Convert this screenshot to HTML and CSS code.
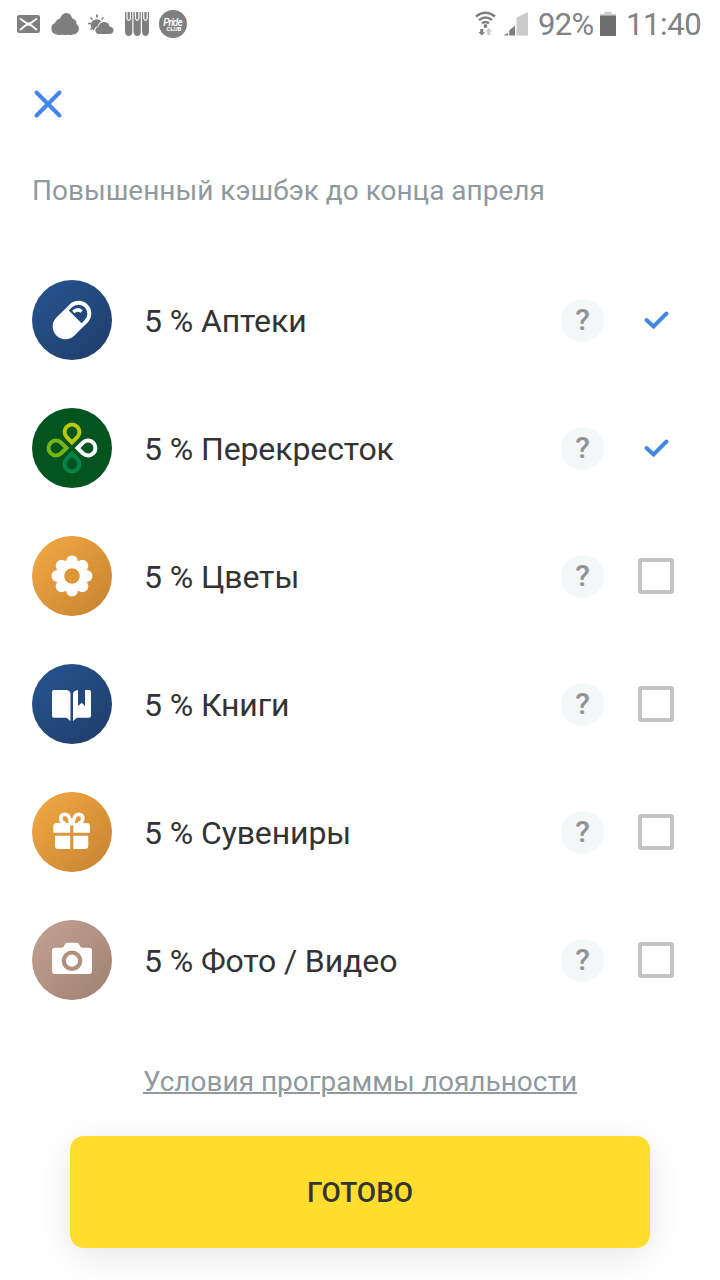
FILE: index.html
```html
<!DOCTYPE html>
<html lang="ru">
<head>
    <meta charset="UTF-8">
    <meta name="viewport" content="width=device-width, initial-scale=1.0">
    <title>Повышенный кэшбэк</title>
    <link rel="stylesheet" href="styles.css">
</head>
<body>

    <!-- status bar -->
    <div class="status-bar">
        <svg class="status-icons" width="200" height="48" viewBox="0 0 200 48">
            <rect x="17" y="15" width="23" height="18" rx="2"/>
            <path class="cut" d="M20 18.500L25.500 22.500Q28.500 24.500 31.500 22.500L37 18.500M20 30L25.500 25.500Q28.500 23.500 31.500 25.500L37 30"/>
            <path d="M57 34.500A6 6 0 0 1 55 23Q56 19.500 60 18.500Q62 13 66.500 13Q71 13.500 72 18Q77 20 76.500 24Q79 25.500 79 28.500Q78.500 34 73 34.500Q70 35.500 68 34.500Q65 35.500 62 34.500Q59 35.500 57 34.500Z"/>
            <path d="M94 30.500A6 6 0 1 1 101.500 21.500Q98.500 22.500 98 26Q94.500 27 94 30.500Z"/>
            <path class="rays" d="M88 23.500H91M90.500 17.500L92.500 19.500M97 14.500V17.500M103.500 17.500L101.500 19.500M90.500 29.500L92 28"/>
            <path d="M97.500 34A4 4 0 0 1 98.500 26.500Q100 21.500 105 22Q109 22.500 109.500 26.500Q113.500 27 113.500 30.500Q113 34 109.500 34Z"/>
            <path d="M125 12H132.300V32Q132 36 128.700 36Q125.500 36 125 32ZM133.500 12H140.800V32Q140.500 36 137.200 36Q134 36 133.500 32ZM142 12H149V32Q148.500 36 145.500 36Q142.500 36 142 32Z"/>
            <path class="cut thin" d="M127 12V18.500Q128.700 22.500 130.400 18.500V12M135.500 12V18.500Q137.200 22.500 138.900 18.500V12M143.800 12V18.500Q145.500 22.500 147.200 18.500V12"/>
            <circle cx="173" cy="24" r="14"/>
            <text class="script" x="172.500" y="25.500" text-anchor="middle">Pride</text>
            <text class="club" x="174" y="31" text-anchor="middle">CLUB</text>
        </svg>
        <div class="status-right">
            <svg width="56" height="48" viewBox="0 0 56 48">
                <path class="wifi" d="M1 16.500Q10.500 9 20 16.500M4 20Q10.500 15 17 20M7 23.300Q10.500 20.500 14 23.300"/>
                <circle cx="10.500" cy="26" r="1.900"/>
                <path d="M5.200 29H8.200V32H10L6.700 35.500L3.500 32H5.200Z"/>
                <path class="pale" d="M12.200 35V31.500H10.500L13.700 28L17 31.500H15.200V35Z"/>
                <path class="pale" d="M41.500 35.500V17.500L53 12V35.500Z"/>
                <path d="M29 35.500L33 32.500V35.500ZM34.200 35.500V30.500L40 25.500V35.500Z"/>
            </svg>
            <span class="battery-text">92%</span>
            <svg class="battery" width="16" height="24" viewBox="0 0 16 24">
                <path class="pale" d="M4.500 0H11.500V2H16V3.500H0V2H4.500Z"/>
                <rect y="3.500" width="16" height="20.500"/>
            </svg>
            <span class="clock">11:40</span>
        </div>
    </div>

    <div class="toolbar">
        <button class="close-button" aria-label="Закрыть">
            <svg width="32" height="32" viewBox="0 0 32 32">
                <path d="M4.500 4.500L27.500 27.500M27.500 4.500L4.500 27.500"/>
            </svg>
        </button>
    </div>

    <p class="subtitle">Повышенный кэшбэк до конца апреля</p>

    <!-- categories -->
    <ul class="category-list">
        <li class="category">
            <svg class="category-icon blue" viewBox="0 0 80 80">
                <g transform="rotate(45 40 40)">
                    <rect x="27.300" y="18" width="25.400" height="44" rx="12.700"/>
                    <path class="hole-blue" d="M31 35.500V31A9 9 0 0 1 49 31V35.500Z"/>
                </g>
                <path class="glint" d="M41.300 32Q45.500 28 49.700 31.500"/>
            </svg>
            <span class="category-name">5 % Аптеки</span>
            <span class="help">?</span>
            <svg class="check" viewBox="0 0 36 36"><path d="M8.500 18L15.500 24.500L28.500 11.500"/></svg>
        </li>
        <li class="category">
            <svg class="category-icon green" viewBox="0 0 80 80">
                <path class="petal lower" transform="rotate(180 40 40)" d="M40 34.500L34.500 28.900A7.400 7.400 0 1 1 45.500 28.900Z"/>
                <path class="petal left" transform="rotate(-90 40 40)" d="M40 34.500L34.500 28.900A7.400 7.400 0 1 1 45.500 28.900Z"/>
                <path class="petal right" transform="rotate(90 40 40)" d="M40 34.500L34.500 28.900A7.400 7.400 0 1 1 45.500 28.900Z"/>
                <path class="petal upper" d="M40 34.500L34.500 28.900A7.400 7.400 0 1 1 45.500 28.900Z"/>
            </svg>
            <span class="category-name">5 % Перекресток</span>
            <span class="help">?</span>
            <svg class="check" viewBox="0 0 36 36"><path d="M8.500 18L15.500 24.500L28.500 11.500"/></svg>
        </li>
        <li class="category">
            <svg class="category-icon orange" viewBox="0 0 80 80">
                <circle cx="40" cy="25.500" r="6"/>
                <circle cx="50.300" cy="29.700" r="6"/>
                <circle cx="54.500" cy="40" r="6"/>
                <circle cx="50.300" cy="50.300" r="6"/>
                <circle cx="40" cy="54.500" r="6"/>
                <circle cx="29.700" cy="50.300" r="6"/>
                <circle cx="25.500" cy="40" r="6"/>
                <circle cx="29.700" cy="29.700" r="6"/>
                <circle cx="40" cy="40" r="14"/>
                <circle class="hole-orange" cx="40" cy="40" r="7.800"/>
            </svg>
            <span class="category-name">5 % Цветы</span>
            <span class="help">?</span>
            <span class="checkbox"></span>
        </li>
        <li class="category">
            <svg class="category-icon blue" viewBox="0 0 80 80">
                <path d="M22 26H34.500Q38.500 26.500 38.500 30V57L34.500 53.700H22Q20 53.700 20 51.700V28Q20 26 22 26Z"/>
                <path d="M41 57V30Q41.300 26.700 46 26V42L49.700 38.700L53 42V26H57Q59 26 59 28V51.700Q59 53.700 57 53.700H45Z"/>
            </svg>
            <span class="category-name">5 % Книги</span>
            <span class="help">?</span>
            <span class="checkbox"></span>
        </li>
        <li class="category">
            <svg class="category-icon orange" viewBox="0 0 80 80">
                <path class="bow" d="M38.500 32Q38.500 22.300 32.500 22.300Q28.500 22.800 28.700 27Q29.500 31 33.500 31.500M41 32Q41.500 22.300 47 22.300Q51 22.800 50.800 27Q50 31 46 31.500"/>
                <path d="M24.500 31H55Q58 31.300 58 34.500V40.700H21.300V34.500Q21.500 31.300 24.500 31Z"/>
                <path d="M23 43.700H38.200V57H26Q23 57 23 54ZM41.300 43.700H56.300V54Q56.300 57 53.300 57H41.300Z"/>
                <path class="hole-orange" d="M38.200 33.500H41.300V41H38.200Z"/>
            </svg>
            <span class="category-name">5 % Сувениры</span>
            <span class="help">?</span>
            <span class="checkbox"></span>
        </li>
        <li class="category">
            <svg class="category-icon brown" viewBox="0 0 80 80">
                <path d="M23 27.700H29.500Q31.500 27.700 32.300 25.500Q33 22.700 35 22.700H45Q47 22.700 47.700 25.500Q48.500 27.700 50.500 27.700H57Q60 27.700 60 30.700V51Q60 54 57 54H23Q20 54 20 51V30.700Q20 27.700 23 27.700Z"/>
                <circle class="lens" cx="40" cy="40.700" r="8.200"/>
            </svg>
            <span class="category-name">5 % Фото / Видео</span>
            <span class="help">?</span>
            <span class="checkbox"></span>
        </li>
    </ul>

    <div class="footer">
        <a class="terms" href="#">Условия программы лояльности</a>
        <button class="done-button">ГОТОВО</button>
    </div>

</body>
</html>
```
FILE: styles.css
```css
* {
    margin: 0;
    padding: 0;
    box-sizing: border-box;
}

body {
    width: 720px;
    height: 1280px;
    overflow: hidden;
    background-color: #fff;
    font-family: Roboto, "Noto Sans", sans-serif;
    color: #333;
}

svg {
    display: block;
}

button {
    border: none;
    background: none;
    font-family: inherit;
    cursor: pointer;
}

.status-bar {
    display: flex;
    justify-content: space-between;
    height: 48px;
    padding-right: 19px;
    color: #828282;
    fill: #7f7f7f;
}

.status-icons .cut {
    fill: none;
    stroke: #fff;
    stroke-width: 2;
}

.status-icons .thin {
    stroke-width: 1.2;
}

.status-icons .rays {
    stroke: #7f7f7f;
    stroke-width: 1.7;
}

.script {
    fill: #fff;
    font-size: 10px;
    font-style: italic;
    font-weight: 500;
    letter-spacing: -0.8px;
}

.club {
    fill: #fff;
    font-size: 6px;
    font-weight: 700;
}

.status-right {
    display: flex;
    font-size: 31px;
    line-height: 50px;
}

.wifi {
    fill: none;
    stroke: #7f7f7f;
    stroke-width: 2.4;
}

.pale {
    fill: #cbcbcb;
}

.battery-text {
    width: 56px;
    margin-left: 7px;
    letter-spacing: -0.7px;
}

.battery {
    margin: 12px 10px 0 6px;
    fill: #6e6e6e;
}

.clock {
    width: 75px;
    letter-spacing: -0.4px;
}

.toolbar {
    height: 112px;
    padding: 40px 32px;
}

.close-button {
    width: 32px;
    height: 32px;
}

.close-button path {
    stroke: #3f86ea;
    stroke-width: 4;
    stroke-linecap: round;
}

.subtitle {
    height: 96px;
    padding-left: 32px;
    font-size: 28px;
    line-height: 62px;
    color: #90999c;
}

.category-list {
    list-style-type: none;
}

.category {
    display: flex;
    align-items: center;
    height: 128px;
    padding: 0 46px 0 32px;
}

.category-icon {
    width: 80px;
    height: 80px;
    margin-right: 32px;
    border-radius: 50%;
    fill: #fff;
}

.blue {
    background: linear-gradient(135deg, #265590, #1f3d6a);
}

.green {
    background: #045420;
}

.orange {
    background: linear-gradient(135deg, #f4a944, #c58230);
}

.brown {
    background: linear-gradient(135deg, #c5a394, #9e7f70);
}

.hole-blue {
    fill: #23497c;
}

.hole-orange {
    fill: #dd9739;
}

.glint {
    fill: none;
    stroke: #fff;
    stroke-width: 3.4;
}

.petal {
    fill: none;
    stroke-width: 4;
}

.upper {
    stroke: #b9c80f;
}

.left {
    stroke: #78b51b;
}

.right {
    stroke: #fff;
}

.lower {
    stroke: #038543;
}

.bow {
    fill: none;
    stroke: #fff;
    stroke-width: 3.6;
}

.lens {
    stroke: #b08f80;
    stroke-width: 4.2;
}

.category-name {
    flex: 1;
    padding-top: 2px;
    font-size: 32px;
    letter-spacing: -0.1px;
}

.help {
    width: 43px;
    height: 43px;
    margin-right: 34px;
    border-radius: 50%;
    background-color: #f4f7f7;
    font-size: 30px;
    font-weight: 500;
    line-height: 42px;
    text-align: center;
    color: #909499;
}

.check {
    width: 36px;
    height: 36px;
    fill: none;
    stroke: #4287e6;
    stroke-width: 4;
    stroke-linecap: round;
}

.checkbox {
    width: 36px;
    height: 36px;
    border: 4px solid #c4c4c4;
    border-radius: 3px;
}

.footer {
    display: flex;
    flex-direction: column;
    align-items: center;
    padding-top: 34px;
}

.terms {
    height: 78px;
    font-size: 28px;
    line-height: 48px;
    color: #90999c;
    text-decoration: underline;
    text-decoration-thickness: 2px;
}

.done-button {
    width: 580px;
    height: 112px;
    border-radius: 14px;
    background-color: #ffdd2d;
    box-shadow: 0 8px 40px rgba(0, 0, 0, 0.1);
    font-size: 28px;
    font-weight: 500;
    color: #333;
}
```
